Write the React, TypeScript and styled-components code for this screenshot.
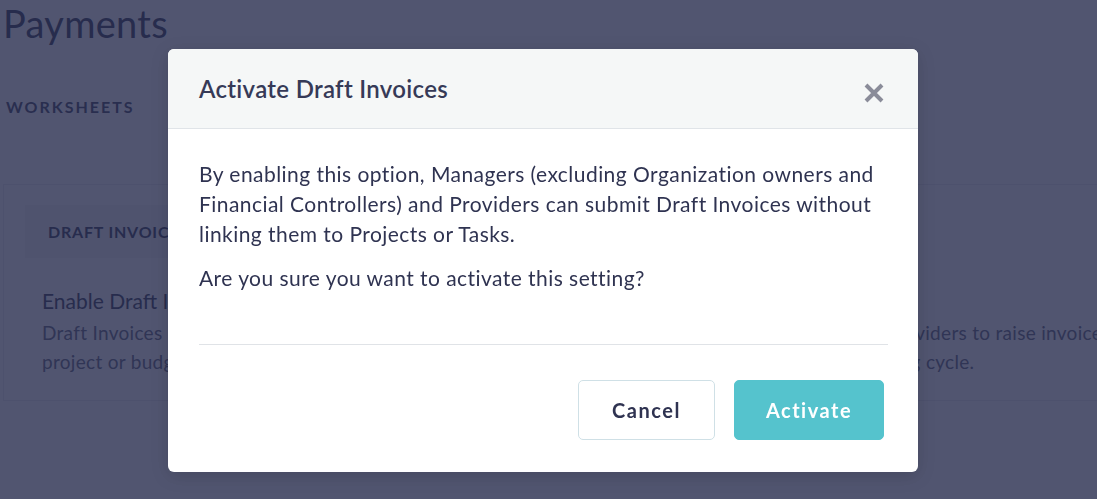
import styled, { createGlobalStyle } from "styled-components";

const GlobalStyle = createGlobalStyle`
  html, body {
    margin: 0;
    padding: 0;
    background: #ffffff;
    font-family: "Lato", "Noto Sans", sans-serif;
    overflow: hidden;
  }
`;

const Page = styled.div`
  width: 1097px;
  height: 499px;
  box-sizing: border-box;
  padding: 0 0 0 3px;
  color: #2f3351;
`;

const PageTitle = styled.h1`
  margin: 0;
  padding: 0;
  font-size: 38px;
  font-weight: 400;
  line-height: 46px;
  letter-spacing: 0.3px;
  color: #2f3351;
`;

const SectionLabel = styled.div`
  margin-top: 51px;
  padding-left: 3px;
  font-size: 16px;
  font-weight: 700;
  letter-spacing: 2px;
  color: #3a3e5c;
`;

const Card = styled.section`
  margin-top: 68px;
  border: 1px solid #e8eaee;
  border-right: none;
  background: #fcfcfd;
  padding: 20px 0 24px 21px;
  overflow: hidden;
`;

const TabBox = styled.div`
  width: 190px;
  height: 53px;
  display: flex;
  align-items: center;
  padding-left: 23px;
  background: #f3f4f6;
  font-size: 16px;
  font-weight: 700;
  letter-spacing: 0.8px;
  color: #2f3351;
`;

const SettingTitle = styled.div`
  margin: 29px 0 0 17px;
  font-size: 21px;
  line-height: 28px;
  color: #2f3351;
`;

const SettingText = styled.p`
  margin: 3px 0 0 17px;
  font-size: 19px;
  line-height: 29px;
  letter-spacing: 0.3px;
  color: #5c6078;
  white-space: nowrap;
`;

const Overlay = styled.div`
  position: fixed;
  inset: 0;
  background: rgba(38, 43, 76, 0.8);
  display: flex;
  justify-content: flex-start;
  align-items: flex-start;
  padding-left: 168px;
`;

const Modal = styled.div`
  margin-top: 49px;
  width: 750px;
  background: #ffffff;
  border-radius: 6px;
  overflow: hidden;
  box-shadow: 0 4px 18px rgba(0, 0, 0, 0.15);
`;

const ModalHeader = styled.div`
  height: 80px;
  box-sizing: border-box;
  display: flex;
  align-items: center;
  justify-content: space-between;
  padding: 0 32px 0 31px;
  background: #f5f7f7;
  border-bottom: 1px solid #e0e4e8;
`;

const ModalTitle = styled.h2`
  margin: 0;
  font-size: 24px;
  font-weight: 600;
  letter-spacing: 0.3px;
  color: #363a57;
`;

const CloseButton = styled.button`
  border: none;
  background: none;
  padding: 0;
  margin-top: 8px;
  width: 24px;
  height: 24px;
  display: flex;
  align-items: center;
  justify-content: center;
  cursor: pointer;
`;

const ModalBody = styled.div`
  padding: 30px 30px 0 31px;
`;

const Paragraph = styled.p<{ $gap?: number }>`
  margin: 0 0 ${(p) => p.$gap ?? 0}px;
  font-size: 21px;
  line-height: 30px;
  letter-spacing: 0.45px;
  color: #2f3351;
`;

const Divider = styled.hr`
  margin: 51px 0 0;
  border: none;
  border-top: 1px solid #e0e3e7;
`;

const Footer = styled.div`
  display: flex;
  justify-content: flex-end;
  gap: 19px;
  padding: 35px 34px 32px 0;
`;

const Button = styled.button<{ $primary?: boolean }>`
  height: 60px;
  border-radius: 5px;
  font-family: inherit;
  font-size: 20px;
  font-weight: 700;
  letter-spacing: 1.5px;
  cursor: pointer;
  border: 1px solid ${(p) => (p.$primary ? "#55c3cd" : "#cfe0e6")};
  background: ${(p) => (p.$primary ? "#55c3cd" : "#ffffff")};
  color: ${(p) => (p.$primary ? "#ffffff" : "#2f3351")};
  width: ${(p) => (p.$primary ? "150px" : "137px")};
`;

const CloseIcon = () => (
  <svg width="22" height="22" viewBox="0 0 22 22">
    <path d="M3 3 L19 19 M19 3 L3 19" stroke="#8a8c99" strokeWidth="4" strokeLinecap="butt" />
  </svg>
);

export default function App() {
  return (
    <>
      <GlobalStyle />
      <Page>
        <PageTitle>Payments</PageTitle>
        <SectionLabel>WORKSHEETS</SectionLabel>
        <Card>
          <TabBox>DRAFT INVOICES</TabBox>
          <SettingTitle>Enable Draft Invoices</SettingTitle>
          <SettingText>
            Draft Invoices let Managers and Providers submit invoices quickly and without any delay, allowing Providers to raise invoices
            <br />
            project or budget being assigned first, so that work can then be easily invoiced within the active billing cycle.
          </SettingText>
        </Card>
      </Page>
      <Overlay>
        <Modal>
          <ModalHeader>
            <ModalTitle>Activate Draft Invoices</ModalTitle>
            <CloseButton aria-label="Close">
              <CloseIcon />
            </CloseButton>
          </ModalHeader>
          <ModalBody>
            <Paragraph $gap={14}>
              By enabling this option, Managers (excluding Organization owners and Financial Controllers) and Providers can
              submit Draft Invoices without linking them to Projects or Tasks.
            </Paragraph>
            <Paragraph>Are you sure you want to activate this setting?</Paragraph>
            <Divider />
          </ModalBody>
          <Footer>
            <Button>Cancel</Button>
            <Button $primary>Activate</Button>
          </Footer>
        </Modal>
      </Overlay>
    </>
  );
}
